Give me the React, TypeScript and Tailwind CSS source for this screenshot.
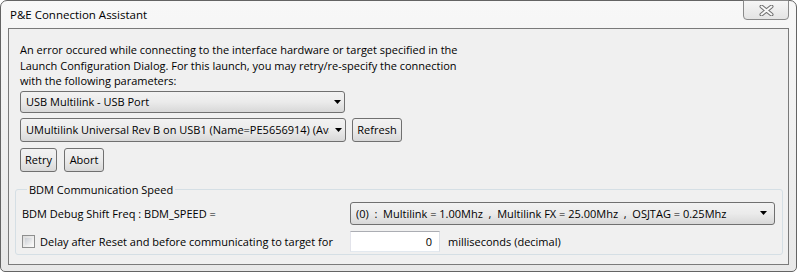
import React from "react";

const font = { fontFamily: '"Open Sans", "Noto Sans", sans-serif' };

function Arrow() {
  return (
    <svg width="7" height="4" viewBox="0 0 7 4" className="shrink-0">
      <path d="M0 0 H7 L3.5 4 Z" fill="#000" />
    </svg>
  );
}

function Combo({ text, className }: { text: string; className: string }) {
  return (
    <div
      className={`flex items-center gap-[6px] rounded-[3px] border border-[#707070] bg-gradient-to-b from-[#f2f2f2] via-[#ebebeb] to-[#d8d8d8] pl-[5px] ${className}`}
    >
      <span className="flex-1 overflow-hidden whitespace-pre text-[11px] leading-[15px] text-black">{text}</span>
      <Arrow />
    </div>
  );
}

function Button({ label, className }: { label: string; className: string }) {
  return (
    <div
      className={`flex items-center justify-center rounded-[3px] border border-[#707070] bg-gradient-to-b from-[#f2f2f2] via-[#ebebeb] to-[#d8d8d8] text-[11px] leading-[15px] text-black ${className}`}
    >
      {label}
    </div>
  );
}

export default function App() {
  return (
    <div className="h-[274px] w-[797px] bg-white" style={font}>
      <div className="flex h-[272px] flex-col rounded-t-[7px] rounded-b-[5px] border border-[#646464] bg-gradient-to-b from-[#f8f8f8] to-[#e8e8e8]">
        {/* title bar */}
        <div className="flex h-[27px] items-start justify-between">
          <span className="ml-[9px] mt-[6px] text-[11.5px] leading-[15px] text-black">P&amp;E Connection Assistant</span>
          <div className="mr-[7px] mt-[-1px] flex h-[20px] w-[46px] items-center justify-center rounded-b-[4px] border border-[#8a8a8a] bg-gradient-to-b from-[#f6f6f6] to-[#e4e4e4]">
            <svg width="15" height="11" viewBox="0 0 15 11">
              <path d="M2.5 1.5 L12.5 9.5 M12.5 1.5 L2.5 9.5" stroke="#707070" strokeWidth="4" strokeLinecap="round" />
              <path d="M2.5 1.5 L12.5 9.5 M12.5 1.5 L2.5 9.5" stroke="#f8f8f8" strokeWidth="2" strokeLinecap="round" />
            </svg>
          </div>
        </div>

        {/* client area */}
        <div className="mx-[7px] mb-[6px] flex-1 border border-[#7a7a7a] bg-[#f0f0f0]">
          <div className="pl-[11px] pt-[13px]">
            <p className="text-[11px] leading-[15.5px] text-black">
              An error occured while connecting to the interface hardware or target specified in the
              <br />
              Launch Configuration Dialog. For this launch, you may retry/re-specify the connection
              <br />
              with the following parameters:
            </p>
            <Combo text="USB Multilink - USB Port" className="mt-[2px] h-[22px] w-[325px] pr-[3px]" />
            <div className="mt-[5px] flex gap-[6px]">
              <Combo
                text="UMultilink Universal Rev B on USB1 (Name=PE5656914) (Available)"
                className="h-[24px] w-[326px] pr-[3px]"
              />
              <Button label="Refresh" className="h-[24px] w-[50px]" />
            </div>
            <div className="mt-[6px] flex gap-[7px]">
              <Button label="Retry" className="h-[24px] w-[37px]" />
              <Button label="Abort" className="h-[24px] w-[40px]" />
            </div>
          </div>

          <fieldset className="ml-[6px] mr-[5px] mt-[10px] rounded-[3px] border border-[#d5dfe5] pb-[2px] pl-[6px] pr-[6px]">
            <legend className="ml-[5px] px-[2px] text-[11px] leading-[15px] text-black">BDM Communication Speed</legend>
            <div className="mt-[5px] flex items-center">
              <span className="w-[328px] text-[11px] leading-[15px] text-black">BDM Debug Shift Freq : BDM_SPEED =</span>
              <Combo
                text="(0)  :  Multilink = 1.00Mhz  ,  Multilink FX = 25.00Mhz  ,  OSJTAG = 0.25Mhz"
                className="h-[23px] w-[425px] pr-[7px]"
              />
            </div>
            <div className="mt-[6px] flex items-center">
              <div className="flex w-[328px] items-center">
                <div className="h-[13px] w-[13px] border border-[#8e8f8f] bg-gradient-to-br from-[#dcdcdc] to-[#fbfbfb] p-[2px]">
                  <div className="h-full w-full bg-gradient-to-br from-[#cbcfd5] to-[#f6f6f6]" />
                </div>
                <span className="ml-[5px] text-[11px] leading-[15px] text-black">
                  Delay after Reset and before communicating to target for
                </span>
              </div>
              <div className="flex h-[21px] w-[90px] items-center justify-end border border-[#abadb3] border-b-[#e3e9ef] border-l-[#e2e3ea] border-r-[#dbdfe6] bg-white pr-[7px] text-[11px] leading-[15px] text-black">
                0
              </div>
              <span className="ml-[8px] text-[11px] leading-[15px] text-black">milliseconds (decimal)</span>
            </div>
          </fieldset>
        </div>
      </div>
    </div>
  );
}
